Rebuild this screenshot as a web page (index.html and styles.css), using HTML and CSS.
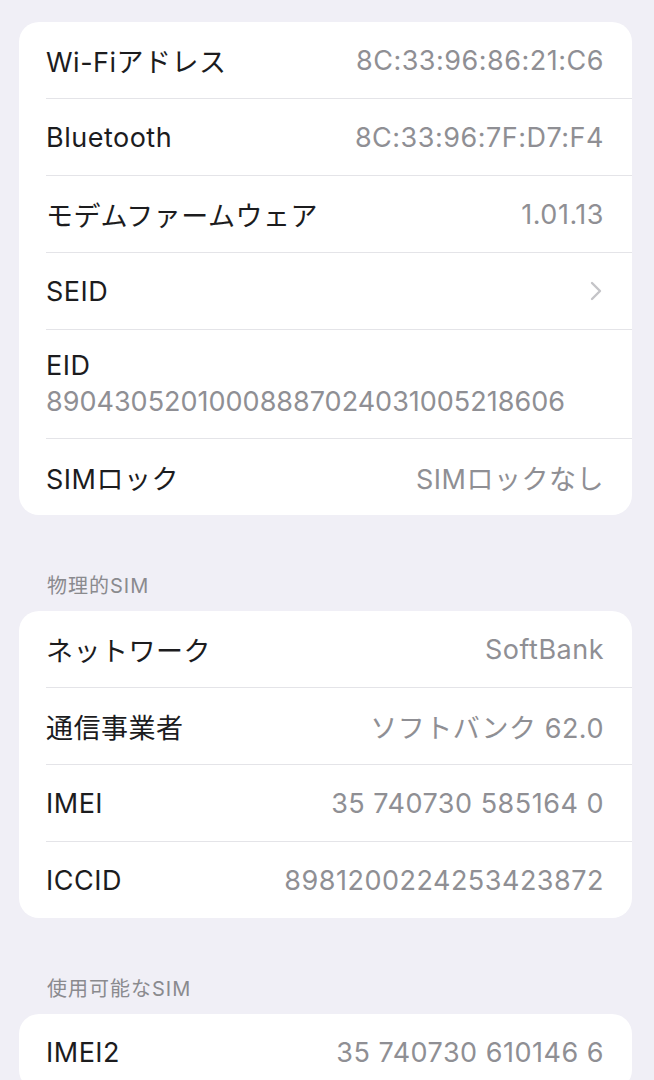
FILE: index.html
```html
<!DOCTYPE html>
<html lang="ja">
<head>
    <meta charset="UTF-8">
    <meta name="viewport" content="width=device-width, initial-scale=1.0">
    <title>情報</title>
    <link rel="stylesheet" href="styles.css">
</head>
<body>
    <div class="page">
        <!-- General info -->
        <div class="group">
            <div class="row">
                <span class="label">Wi-Fiアドレス</span>
                <span class="value">8C:33:96:86:21:C6</span>
            </div>
            <div class="row">
                <span class="label">Bluetooth</span>
                <span class="value">8C:33:96:7F:D7:F4</span>
            </div>
            <div class="row">
                <span class="label">モデムファームウェア</span>
                <span class="value">1.01.13</span>
            </div>
            <div class="row">
                <span class="label">SEID</span>
                <svg class="chevron" width="12" height="20" viewBox="0 0 12 20">
                    <path d="M2 2 L10 10 L2 18" fill="none" stroke="#c4c4c8" stroke-width="2.4" stroke-linecap="round" stroke-linejoin="round"/>
                </svg>
            </div>
            <div class="row row-stacked">
                <span class="label">EID</span>
                <span class="value eid">89043052010008887024031005218606</span>
            </div>
            <div class="row">
                <span class="label">SIMロック</span>
                <span class="value">SIMロックなし</span>
            </div>
        </div>

        <!-- Physical SIM -->
        <div class="section-title">物理的SIM</div>
        <div class="group">
            <div class="row">
                <span class="label">ネットワーク</span>
                <span class="value">SoftBank</span>
            </div>
            <div class="row">
                <span class="label">通信事業者</span>
                <span class="value">ソフトバンク 62.0</span>
            </div>
            <div class="row">
                <span class="label">IMEI</span>
                <span class="value">35 740730 585164 0</span>
            </div>
            <div class="row">
                <span class="label">ICCID</span>
                <span class="value">8981200224253423872</span>
            </div>
        </div>

        <!-- Available SIM -->
        <div class="section-title">使用可能なSIM</div>
        <div class="group">
            <div class="row">
                <span class="label">IMEI2</span>
                <span class="value">35 740730 610146 6</span>
            </div>
        </div>
    </div>
</body>
</html>
```

FILE: styles.css
```css
body {
    background: #f0eff6;
    font-family: Inter, 'Noto Sans CJK JP', sans-serif;
    color: #1d1d1f;
    margin: 0;
    padding: 0;
}

.page {
    padding: 22px 22px 0 19px;
}

.group {
    background: #fff;
    border-radius: 20px;
    overflow: hidden;
}

.row {
    display: flex;
    align-items: center;
    justify-content: space-between;
    height: 76px;
    margin-left: 27px;
    padding-right: 28px;
    border-bottom: 1px solid #e4e4e8;
    font-size: 27px;
    letter-spacing: 0.5px;
}

.row:last-child {
    border-bottom: none;
}

.row-stacked {
    flex-direction: column;
    align-items: flex-start;
    justify-content: center;
    height: auto;
    padding: 18px 0;
}

.row-stacked .label,
.row-stacked .value {
    line-height: 36px;
}

.label {
    color: #1c1c1e;
}

.value {
    color: #8f8f94;
}

.eid {
    letter-spacing: 0;
}

.chevron {
    margin-right: 2px;
}

.section-title {
    font-size: 20px;
    line-height: 24px;
    letter-spacing: 1px;
    color: #8a8a8e;
    margin: 59px 0 13px 28px;
}
```
